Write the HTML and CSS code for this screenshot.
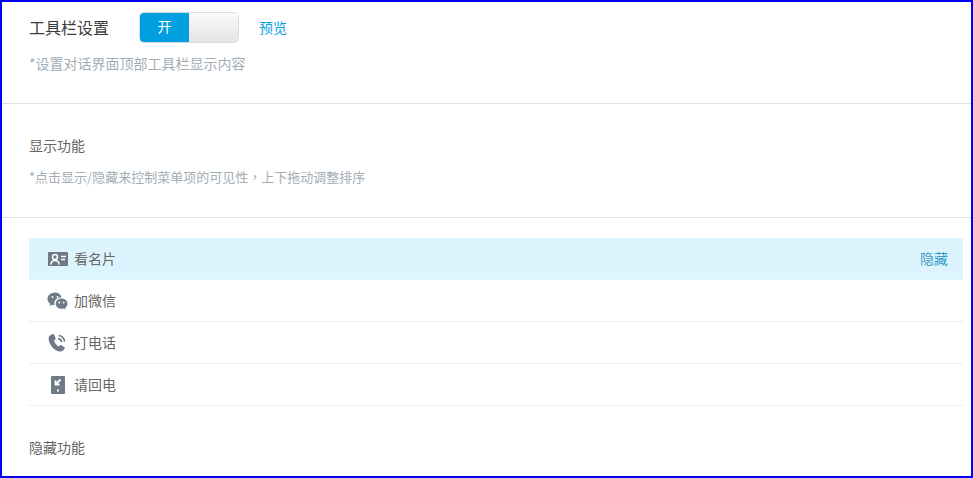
FILE: index.html
```html
<!DOCTYPE html>
<html lang="zh-CN">
<head>
<meta charset="utf-8">
<title>工具栏设置</title>
<link rel="stylesheet" href="styles.css">
</head>
<body>
<main class="frame">
  <section class="head">
    <div class="title-row">
      <h1 class="title">工具栏设置</h1>
      <div class="toggle">
        <span class="toggle-on">开</span>
        <span class="toggle-off"></span>
      </div>
      <a class="preview">预览</a>
    </div>
    <p class="hint-main">*设置对话界面顶部工具栏显示内容</p>
  </section>
  <section class="show">
    <h2 class="label">显示功能</h2>
    <p class="hint-sub">*点击显示/隐藏来控制菜单项的可见性<span class="comma" lang="zh-TW">，</span>上下拖动调整排序</p>
  </section>
  <section class="body">
    <ul class="list">
      <li class="row active">
        <span class="ico">
          <svg width="20" height="14" viewBox="0 0 20 14"><rect width="20" height="14" rx="1" fill="#6f7a86"/><circle cx="7" cy="5" r="2.500" fill="none" stroke="#fff" stroke-width="1.600"/><path d="M2.800 12.500c.3-2.800 2-4 4.200-4s3.900 1.200 4.200 4" fill="none" stroke="#fff" stroke-width="1.600"/><path d="M13 4.500h5M13 7.500h4" stroke="#fff" stroke-width="1.400"/></svg>
        </span>
        <span class="name">看名片</span>
        <a class="action">隐藏</a>
      </li>
      <li class="row">
        <span class="ico">
          <svg width="21" height="18" viewBox="0 0 21 18"><path d="M8 .5C3.800.5.500 3.400.500 7c0 2 1.100 3.600 2.800 4.700L2.700 14l2.500-1.300c.8.200 1.600.3 2.400.3-.2-.6-.3-1.100-.3-1.700 0-3.300 3-5.800 6.800-5.800h.4C14 2.700 11.300.5 8 .5z" fill="#6f7a86"/><path d="M20.500 11.800c0-3-2.700-5.300-5.800-5.300-3.300 0-6 2.300-6 5.300s2.700 5 6 5c.7 0 1.300-.1 1.900-.3l2 1-.5-1.800c1.600-.9 2.400-2.300 2.400-3.900z" fill="#6f7a86"/><circle cx="5.500" cy="5" r="1" fill="#fff"/><circle cx="10.500" cy="5" r="1" fill="#fff"/><circle cx="12.300" cy="10.500" r=".9" fill="#fff"/><circle cx="16.700" cy="10.500" r=".9" fill="#fff"/></svg>
        </span>
        <span class="name">加微信</span>
      </li>
      <li class="row">
        <span class="ico">
          <svg width="19" height="19" viewBox="0 0 18 18"><path d="M4.600 1 1.800 2.300C.6 3 .3 5 .9 7.500c1 3.800 4.800 8.700 9 9.900 1.900.5 3.400.2 4.400-.8l1.500-1.900c.3-.4.200-.9-.2-1.200l-3-1.900c-.4-.2-.8-.2-1.100.1l-1.100 1.200c-2.300-.8-4.200-3.500-4.600-5.700L7 6.100c.3-.3.400-.7.200-1.100L5.700 1.400C5.500 1 5 .8 4.600 1z" fill="#6f7a86"/><path d="M9.500 5.200c1.800.3 3.100 1.600 3.400 3.400M10 2.400c3.100.4 5.300 2.700 5.700 5.800" fill="none" stroke="#6f7a86" stroke-width="1.500"/></svg>
        </span>
        <span class="name">打电话</span>
      </li>
      <li class="row">
        <span class="ico">
          <svg width="14" height="18" viewBox="0 0 14 18"><rect width="14" height="18" rx="1" fill="#6f7a86"/><path d="M9.500 3.500 5 8M4.500 4.500v4h4" fill="none" stroke="#fff" stroke-width="1.800"/><rect x="6" y="13.500" width="2" height="2" fill="#fff"/></svg>
        </span>
        <span class="name">请回电</span>
      </li>
    </ul>
    <h2 class="label hidden-label">隐藏功能</h2>
  </section>
</main>
</body>
</html>
```
FILE: styles.css
```css
* { box-sizing: border-box; }
html, body { margin: 0; padding: 0; background: #fff; }
body {
  font-family: "Noto Sans CJK SC", "Liberation Sans", sans-serif;
  overflow: hidden;
}
.frame {
  width: 973px;
  height: 478px;
  border: 2px solid #0000f5;
  overflow: hidden;
  background: #fff;
}
.head {
  height: 102px;
  padding: 10px 0 0 27px;
  border-bottom: 1px solid #e0e0e0;
}
.title-row { display: flex; align-items: center; height: 30px; }
.title {
  margin: 0;
  width: 111px;
  font-size: 16px;
  font-weight: 400;
  line-height: 29px;
  color: #3c3c3c;
}
.toggle {
  display: flex;
  width: 100px;
  height: 31px;
  margin-left: -1px;
  border: 1px solid #dcdcdc;
  border-radius: 5px;
  overflow: hidden;
}
.toggle-on {
  width: 49px;
  background: #009fdf;
  color: #fff;
  font-size: 14px;
  line-height: 27px;
  text-align: center;
}
.toggle-off {
  flex: 1;
  background: linear-gradient(#fafafa, #e4e4e4);
}
.preview {
  margin-left: 20px;
  font-size: 14px;
  color: #0a9fdf;
}
.hint-main {
  margin: 10px 0 0;
  font-size: 14px;
  line-height: 22px;
  color: #a3adb5;
}
.show {
  height: 114px;
  padding-top: 30px;
  padding-left: 27px;
  border-bottom: 1px solid #e0e0e0;
}
.label {
  margin: 0;
  font-size: 14px;
  font-weight: 400;
  line-height: 22px;
  color: #666;
}
.hint-sub {
  margin: 10px 0 0;
  font-size: 13px;
  line-height: 22px;
  color: #a3adb5;
}
.comma { font-family: "Noto Sans CJK TC", sans-serif; }
.body { padding: 20px 8px 0 27px; }
.list { margin: 0; padding: 0; list-style: none; }
.row {
  display: flex;
  align-items: center;
  height: 42px;
  padding: 0 15px 0 0;
  border-bottom: 1px solid #eee;
  font-size: 14px;
  color: #666;
}
.row.active { background: #dcf4fe; border-bottom-color: #e6f6fc; }
.ico {
  display: flex;
  justify-content: center;
  align-items: center;
  width: 21px;
  margin-left: 18px;
  margin-right: 6px;
}
.name { flex: 1; padding-bottom: 2px; }
.action { color: #3a9cc8; font-size: 14px; padding-bottom: 2px; }
.hidden-label { margin-top: 30px; }
```
